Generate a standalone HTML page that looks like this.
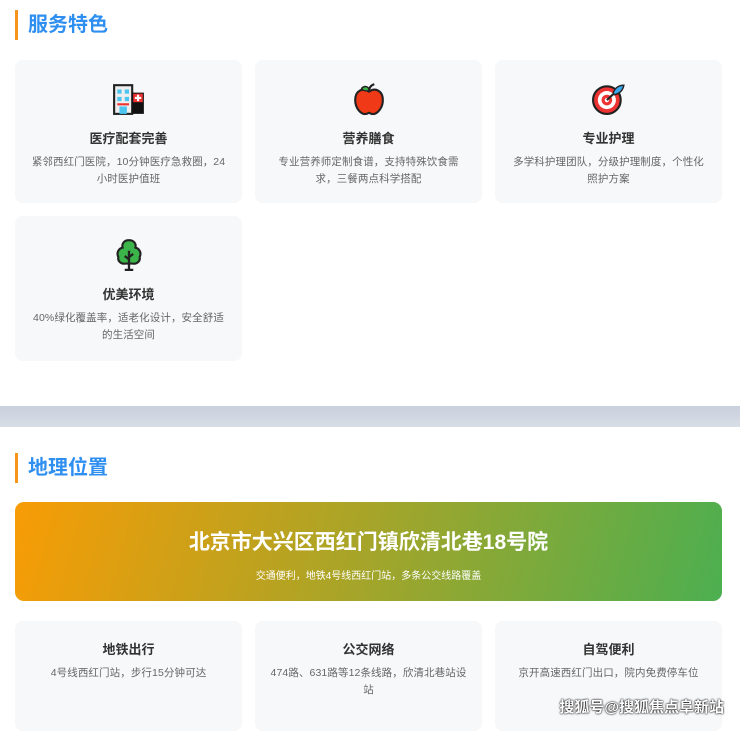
<!DOCTYPE html>
<html><head><meta charset="utf-8"><style>
*{margin:0;padding:0;box-sizing:border-box}
body{width:740px;height:722px;overflow:hidden;background:#fff;font-family:"Liberation Sans","Noto Sans CJK SC",sans-serif;position:relative}
.h{position:absolute;left:15px;height:30px;border-left:3px solid #f7941d;padding-left:10px;font-size:20px;font-weight:bold;color:#2e8ff0;line-height:30px}
.card{position:absolute;width:227px;background:#f7f8fa;border-radius:8px;text-align:center}
.card .ic{height:32px;margin-top:22px;display:flex;justify-content:center}
.card h4{font-size:13px;color:#333;margin-top:14px;font-weight:bold}
.card p{font-size:10.5px;color:#666;line-height:17px;margin-top:7px;padding:0 14px;letter-spacing:0.1px}
.band{position:absolute;left:0;top:406px;width:740px;height:21px;background:linear-gradient(#c9d0dd,#d8dde6)}
.banner{position:absolute;left:15px;top:502px;width:707px;height:99px;border-radius:9px;background:linear-gradient(105deg,#f89c05 0%,#b6a322 40%,#4caf50 100%);text-align:center;color:#fff}
.banner h2{font-size:21px;margin-top:24px;font-weight:bold}
.banner p{font-size:10px;margin-top:11px}
.c2 h4{margin-top:18px}
.wm{position:absolute;right:16px;top:696px;font-size:15px;color:#fff;font-weight:bold;text-shadow:0 0 2px #000,0 0 1px #000}
</style></head><body>
<div class="h" style="top:10px">服务特色</div>
<div class="card" style="left:15px;top:60px;height:143px"><div class="ic"><svg width="32" height="34" viewBox="0 0 30 32"><rect x="1" y="3" width="17" height="27" fill="#eee" stroke="#222" stroke-width="2"/><rect x="18" y="10" width="11" height="20" fill="#111"/><rect x="19" y="11" width="9" height="8" fill="#e33"/><path d="M23.5 12v6M20.5 15h6" stroke="#fff" stroke-width="2"/><rect x="4" y="7" width="4" height="4" fill="#4cc6f0"/><rect x="11" y="7" width="4" height="4" fill="#4cc6f0"/><rect x="4" y="14" width="4" height="4" fill="#4cc6f0"/><rect x="11" y="14" width="4" height="4" fill="#4cc6f0"/><rect x="4" y="20" width="11" height="2" fill="#e33"/><rect x="6" y="23" width="7" height="7" fill="#4cc6f0"/></svg></div><h4>医疗配套完善</h4><p>紧邻西红门医院，10分钟医疗急救圈，24<br>小时医护值班</p></div>
<div class="card" style="left:255px;top:60px;height:143px"><div class="ic"><svg width="32" height="34" viewBox="0 0 30 32"><path d="M15 9C9 5 2 8 2 17c0 8 6 14 10 13 2 0 2-1 3-1s1 1 3 1c4 1 10-5 10-13 0-9-7-12-13-8z" fill="#f03a17" stroke="#222" stroke-width="2"/><path d="M15 9c0-4 2-6 5-7" stroke="#222" stroke-width="2" fill="none"/><path d="M8 6c3-3 7-2 7 2-3 1-6 0-7-2z" fill="#3bb54a" stroke="#222" stroke-width="1.3"/></svg></div><h4>营养膳食</h4><p>专业营养师定制食谱，支持特殊饮食需<br>求，三餐两点科学搭配</p></div>
<div class="card" style="left:495px;top:60px;height:143px"><div class="ic"><svg width="34" height="34" viewBox="0 0 32 32"><circle cx="14" cy="17" r="13" fill="#e33" stroke="#222" stroke-width="2"/><circle cx="14" cy="17" r="8.5" fill="#fff"/><circle cx="14" cy="17" r="5" fill="#e33"/><circle cx="14" cy="17" r="2" fill="#fff"/><path d="M14 17L28 4" stroke="#222" stroke-width="2"/><path d="M20 10c2-5 6-7 10-7-1 5-4 8-9 9z" fill="#3aa9f0" stroke="#222" stroke-width="1.3"/></svg></div><h4>专业护理</h4><p>多学科护理团队，分级护理制度，个性化<br>照护方案</p></div>
<div class="card" style="left:15px;top:216px;height:145px"><div class="ic"><svg width="32" height="34" viewBox="0 0 30 32"><path d="M15 2c-5 0-7 4-6 7-4 1-6 5-4 9-1 4 3 7 7 6h6c4 1 8-2 7-6 2-4 0-8-4-9 1-3-1-7-6-7z" fill="#3bb54a" stroke="#222" stroke-width="2"/><path d="M15 12v18M11 30h8M15 20l-4-3M15 18l4-3" stroke="#222" stroke-width="2.2" fill="none"/></svg></div><h4>优美环境</h4><p>40%绿化覆盖率，适老化设计，安全舒适<br>的生活空间</p></div>
<div class="band"></div>
<div class="h" style="top:453px">地理位置</div>
<div class="banner"><h2>北京市大兴区西红门镇欣清北巷18号院</h2><p>交通便利，地铁4号线西红门站，多条公交线路覆盖</p></div>
<div class="card c2" style="left:15px;top:621px;height:110px"><h4>地铁出行</h4><p>4号线西红门站，步行15分钟可达</p></div>
<div class="card c2" style="left:255px;top:621px;height:110px"><h4>公交网络</h4><p>474路、631路等12条线路，欣清北巷站设<br>站</p></div>
<div class="card c2" style="left:495px;top:621px;height:110px"><h4>自驾便利</h4><p>京开高速西红门出口，院内免费停车位</p></div>
<div class="wm">搜狐号@搜狐焦点阜新站</div>
</body></html>
